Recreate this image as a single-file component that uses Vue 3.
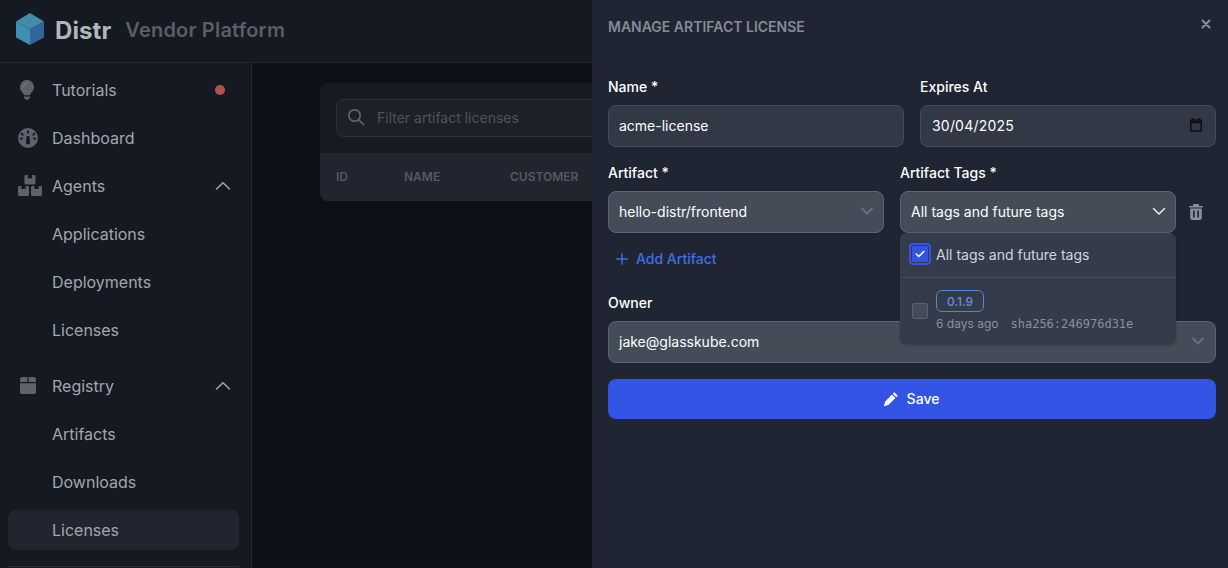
<script setup>
const agentItems = ['Applications', 'Deployments', 'Licenses']
const registryItems = ['Artifacts', 'Downloads', 'Licenses']
</script>

<template>
  <div class="page">
    <header class="topbar">
      <svg class="logo" width="30" height="34" viewBox="0 0 30 34">
        <path d="M15 1 29 9.500 15 17.500 1 9.500Z" fill="#458ba8" />
        <path d="M1 9.500 15 17.500V33L1 25.500Z" fill="#3f8fb2" />
        <path d="M29 9.500 15 17.500V33L29 25.500Z" fill="#33659d" />
      </svg>
      <span class="brand">Distr</span>
      <span class="product">Vendor Platform</span>
    </header>

    <div class="body">
      <aside class="sidebar">
        <nav class="nav">
          <a class="item">
            <svg class="icon" width="24" height="24" viewBox="0 0 24 24"><path d="M11 2a7.200 7.200 0 0 0-4.500 12.600c.8.700 1.300 1.700 1.400 2.600h6.200c.1-.9.600-1.900 1.400-2.600A7.200 7.200 0 0 0 11 2Zm-3 16.500h6v1.200c0 .6-.4 1-1 1h-.7c-.2.800-.7 1.300-1.300 1.300s-1.100-.5-1.300-1.300H9c-.6 0-1-.4-1-1Z" fill="#5d626c"/><path d="M7.500 9c0-1.800 1.400-3.300 3-3.500" fill="none" stroke="#7a7f88" stroke-linecap="round"/></svg>
            <span class="label">Tutorials</span>
            <span class="dot"></span>
          </a>
          <a class="item">
            <svg class="icon" width="24" height="24" viewBox="0 0 24 24"><path fill-rule="evenodd" clip-rule="evenodd" d="M12 2a10 10 0 1 0 0 20 10 10 0 0 0 0-20Zm-.9 2.500h1.800v3h-1.800ZM5.700 6.500l2.200 2.200-1.200 1.200-2.200-2.200Zm12.600 0 1.200 1.200-2.200 2.200-1.200-1.200ZM3.800 11.800h3v1.800h-3Zm13.400 0h3v1.800h-3ZM10.600 10l2.800 0 .6 6.500a2 2 0 0 1-4 0Z" fill="#5d626c"/></svg>
            <span class="label">Dashboard</span>
          </a>
          <a class="item">
            <svg class="icon agents" width="24" height="22" viewBox="0 0 24 22"><path d="M8 0h1.800v2.500c0 .6.400 1 1 1h2.400c.6 0 1-.4 1-1V0H16c.9 0 1.500.6 1.500 1.500V8c0 .9-.6 1.500-1.500 1.500H8C7.100 9.500 6.500 8.900 6.500 8V1.500C6.500.6 7.100 0 8 0ZM1.500 11h1.800v2c0 .6.400 1 1 1h2.400c.6 0 1-.4 1-1v-2h1.800c.9 0 1.500.6 1.500 1.500v7c0 .9-.6 1.500-1.500 1.500h-8C.6 21 0 20.400 0 19.500v-7C0 11.600.6 11 1.500 11Zm13 0h1.800v2c0 .6.400 1 1 1h2.400c.6 0 1-.4 1-1v-2h1.800c.9 0 1.500.6 1.500 1.500v7c0 .9-.6 1.500-1.500 1.500h-8c-.9 0-1.500-.6-1.500-1.500v-7c0-.9.600-1.500 1.500-1.500Z" fill="#5d626c"/></svg>
            <span class="label">Agents</span>
            <svg class="chev" width="16" height="10" viewBox="0 0 16 10"><path d="M1.500 8 8 1.800 14.500 8" fill="none" stroke="#a3a6ab" stroke-width="1.500" stroke-linecap="round" stroke-linejoin="round"/></svg>
          </a>
          <a v-for="name in agentItems" :key="name" class="item sub"><span class="label">{{ name }}</span></a>

          <a class="item group">
            <svg class="icon" width="24" height="24" viewBox="0 0 24 24"><path d="M6.500 3h4.900v5H4V5.500C4 4 5 3 6.500 3Zm6.100 0h4.900C19 3 20 4 20 5.500V8h-7.400ZM4 9.300h16v9c0 1-.8 1.700-1.700 1.700H5.700c-.9 0-1.700-.7-1.700-1.700Z" fill="#5d626c"/></svg>
            <span class="label">Registry</span>
            <svg class="chev" width="16" height="10" viewBox="0 0 16 10"><path d="M1.500 8 8 1.800 14.500 8" fill="none" stroke="#a3a6ab" stroke-width="1.500" stroke-linecap="round" stroke-linejoin="round"/></svg>
          </a>
          <a v-for="(name, i) in registryItems" :key="name" class="item sub" :class="{ active: i === 2 }"><span class="label">{{ name }}</span></a>
        </nav>
        <div class="side-rule"></div>
      </aside>

      <main class="main">
        <section class="card">
          <div class="search-wrap">
            <div class="search">
              <svg width="20" height="20" viewBox="0 0 20 20"><circle cx="8.500" cy="8.500" r="5.700" fill="none" stroke="#5f636c" stroke-width="1.700"/><path d="m12.800 12.800 4.700 4.700" stroke="#5f636c" stroke-width="1.700" stroke-linecap="round"/></svg>
              <span>Filter artifact licenses</span>
            </div>
          </div>
          <div class="thead">
            <span class="col-id">ID</span>
            <span class="col-name">NAME</span>
            <span class="col-cust">CUSTOMER</span>
          </div>
        </section>
      </main>
    </div>

    <aside class="drawer">
      <div class="drawer-head">
        <h2>MANAGE ARTIFACT LICENSE</h2>
        <svg class="close" width="12" height="12" viewBox="0 0 12 12"><path d="m2.500 2.500 7 7M9.500 2.500l-7 7" stroke="#8f949d" stroke-width="1.800" stroke-linecap="round"/></svg>
      </div>

      <form class="form" @submit.prevent>
        <div class="two">
          <div class="field">
            <label>Name *</label>
            <input class="control" type="text" value="acme-license" />
          </div>
          <div class="field">
            <label>Expires At</label>
            <div class="control date">
              <span>30/04/2025</span>
              <svg width="12" height="14" viewBox="0 0 12 14"><path d="M2.500 0v2M9.500 0v2" stroke="#0b0d11" stroke-width="1.500"/><rect x=".8" y="2" width="10.400" height="11" rx="1" fill="none" stroke="#0b0d11" stroke-width="1.500"/><path d="M1 4.200h10" stroke="#0b0d11" stroke-width="2"/></svg>
            </div>
          </div>
        </div>

        <div class="artifact-row">
          <div class="field">
            <label>Artifact *</label>
            <div class="control select">
              <span>hello-distr/frontend</span>
              <svg width="14" height="9" viewBox="0 0 14 9"><path d="m2 1.500 5 5 5-5" fill="none" stroke="#687080" stroke-width="2" stroke-linecap="round" stroke-linejoin="round"/></svg>
            </div>
          </div>
          <div class="field tags">
            <label>Artifact Tags *</label>
            <div class="control select">
              <span>All tags and future tags</span>
              <svg width="14" height="9" viewBox="0 0 14 9"><path d="m1.500 1.500 5.500 5.500 5.500-5.500" fill="none" stroke="#e9ebee" stroke-width="1.500" stroke-linecap="round" stroke-linejoin="round"/></svg>
            </div>
            <div class="dropdown">
              <div class="opt-all">
                <span class="check on">
                  <svg width="10" height="8" viewBox="0 0 10 8"><path d="m1.300 4 2.500 2.500 5-5" fill="none" stroke="#fff" stroke-width="1.600" stroke-linecap="round" stroke-linejoin="round"/></svg>
                </span>
                <span>All tags and future tags</span>
              </div>
              <div class="opt-tag">
                <span class="check"></span>
                <div class="tag-info">
                  <span class="badge">0.1.9</span>
                  <div class="meta"><span>6 days ago</span><span class="sha">sha256:246976d31e</span></div>
                </div>
              </div>
            </div>
          </div>
          <div class="trash-cell">
            <svg width="14" height="16" viewBox="0 0 14 16"><path fill-rule="evenodd" clip-rule="evenodd" d="M5 0h4c.6 0 1 .4 1 1v1h3.200c.4 0 .8.300.8.800s-.4.700-.8.700H.8C.4 3.500 0 3.300 0 2.800S.4 2 .8 2H4V1c0-.6.400-1 1-1ZM1.200 4.500h11.600V14c0 1.100-.9 2-2 2H3.200c-1.100 0-2-.9-2-2ZM4 6.500v7h1.700v-7Zm4.300 0v7H10v-7Z" fill="#8a909b"/></svg>
          </div>
        </div>

        <button class="add" type="button">
          <svg width="12" height="12" viewBox="0 0 12 12"><path d="M6 .7v10.600M.7 6h10.600" stroke="#3f6fe8" stroke-width="1.400" stroke-linecap="round"/></svg>
          Add Artifact
        </button>

        <div class="field">
          <label>Owner</label>
          <div class="control select owner">
            <span>jake@glasskube.com</span>
            <svg width="14" height="9" viewBox="0 0 14 9"><path d="m2 1.500 5 5 5-5" fill="none" stroke="#687080" stroke-width="2" stroke-linecap="round" stroke-linejoin="round"/></svg>
          </div>
        </div>

        <button class="save" type="submit">
          <svg width="16" height="16" viewBox="0 0 16 16"><path d="M11.300 1.200 14.800 4.700 13.300 6.200 9.800 2.700ZM8.900 3.600l3.500 3.500-7 7L1 15.200l1-4.500Z" fill="#fff"/></svg>
          Save
        </button>
      </form>
    </aside>
  </div>
</template>

<style>
html, body { margin: 0; background: #0d1017; }
</style>

<style scoped>
* { box-sizing: border-box; }
.page {
  position: relative;
  height: 100vh;
  overflow: hidden;
  background: #0d1017;
  font-family: Inter, "Liberation Sans", sans-serif;
  font-size: 14px;
}
.topbar {
  height: 63px;
  display: flex;
  align-items: center;
  padding-left: 15px;
  background: #141922;
  border-bottom: 1px solid #232834;
}
.logo { margin-top: -4px; }
.brand {
  margin: -2px 0 0 10px;
  font-size: 24px;
  font-weight: 700;
  letter-spacing: 0.1px;
  color: #b3b5b9;
}
.product {
  margin: -2px 0 0 14px;
  font-size: 20px;
  font-weight: 600;
  letter-spacing: 0.2px;
  color: #5a5e68;
}
.body { display: flex; height: 505px; }
.sidebar {
  width: 252px;
  flex: none;
  padding: 7px 12px 0 8px;
  background: #141922;
  border-right: 1px solid #232834;
}
.nav { display: flex; flex-direction: column; gap: 8px; }
.item {
  height: 40px;
  display: flex;
  align-items: center;
  padding: 0 8px;
  border-radius: 8px;
  color: #a4a6ab;
  font-size: 16px;
  font-weight: 400;
}
.item.group { margin-top: 8px; }
.icon { flex: none; margin-right: 12px; }
.icon.agents { margin-left: 2px; margin-right: 10px; }
.sub { padding-left: 44px; }
.label { flex: 1; }
.active { background: #21252f; }
.dot {
  width: 10px;
  height: 10px;
  margin-right: 6px;
  border-radius: 50%;
  background: #b5504e;
}
.side-rule {
  margin-top: 16px;
  height: 1px;
  background: #2a2f3b;
}
.main { flex: 1; padding: 20px 0 0 68px; min-width: 0; }
.card {
  width: 860px;
  border-radius: 8px;
  overflow: hidden;
  background: #161a23;
}
.search-wrap { padding: 16px; }
.search {
  height: 38px;
  display: flex;
  align-items: center;
  gap: 11px;
  padding: 0 0 2px 9px;
  border: 1px solid #2d323e;
  border-radius: 8px;
  background: #1c2029;
  color: #4f535d;
  font-size: 14px;
}
.thead {
  height: 48px;
  display: flex;
  align-items: center;
  padding: 0 0 2px 16px;
  background: #21252f;
  color: #555963;
  font-size: 12px;
  font-weight: 600;
}
.col-id { width: 68px; }
.col-name { width: 106px; }
.drawer {
  position: absolute;
  top: 0;
  right: 0;
  bottom: 0;
  width: 636px;
  padding: 16px 12px 16px 16px;
  background: #1f2532;
  color: #fff;
}
.drawer-head {
  height: 61px;
  display: flex;
  justify-content: space-between;
}
h2 {
  margin: 0;
  padding-top: 1px;
  font-size: 14px;
  line-height: 20px;
  font-weight: 600;
  color: #858b96;
}
.close { margin: 2px 4px 0 0; }
.form { display: flex; flex-direction: column; gap: 16px; }
.two { display: grid; grid-template-columns: 1fr 1fr; gap: 16px; }
.field { display: flex; flex-direction: column; gap: 8px; min-width: 0; }
label {
  font-size: 14px;
  line-height: 20px;
  font-weight: 500;
  color: #fff;
}
.control {
  width: 100%;
  height: 42px;
  padding: 0 10px 2px;
  border: 1px solid #454c5b;
  border-radius: 8px;
  background: #323846;
  color: #fff;
  font: 400 14px Inter, "Liberation Sans", sans-serif;
  outline: none;
}
.date {
  display: flex;
  align-items: center;
  justify-content: space-between;
  padding-left: 11px;
  padding-right: 13px;
  letter-spacing: 0.2px;
}
.select {
  display: flex;
  align-items: center;
  justify-content: space-between;
  padding-right: 9px;
  background: #444c58;
  border-color: #5d6573;
}
.owner { padding-right: 10px; }
.artifact-row {
  display: grid;
  grid-template-columns: 276px 16px 276px 40px;
  margin-bottom: -8px;
}
.artifact-row > .tags { grid-column: 3; position: relative; }
.trash-cell {
  grid-column: 4;
  display: flex;
  align-items: flex-end;
  justify-content: flex-end;
  padding: 0 13px 13px 0;
}
.dropdown {
  position: absolute;
  z-index: 2;
  top: 70px;
  left: 0;
  right: 0;
  height: 111px;
  border-radius: 6px;
  background: #343b4a;
  color: #d1d5db;
  box-shadow: 0 1px 3px rgba(0, 0, 0, 0.25);
}
.opt-all {
  height: 45px;
  display: flex;
  align-items: center;
  gap: 8px;
  padding: 0 0 2px 12px;
  border-bottom: 1px solid #454c5b;
}
.opt-tag {
  display: flex;
  align-items: center;
  gap: 8px;
  padding: 12px 0 0 12px;
}
.opt-tag .check { margin-top: -2px; }
.check {
  flex: none;
  width: 16px;
  height: 16px;
  display: flex;
  align-items: center;
  justify-content: center;
  border: 1px solid #596170;
  border-radius: 2px;
  background: #434b58;
}
.check.on {
  border-color: #3354e4;
  background: #3354e4;
  outline: 2px solid #3354e4;
  outline-offset: 1px;
  border-radius: 1px;
}
.tag-info { display: flex; flex-direction: column; align-items: flex-start; gap: 2px; }
.badge {
  height: 22px;
  padding: 0 10px;
  display: flex;
  align-items: center;
  border: 1px solid #5583e0;
  border-radius: 6px;
  color: #6490e4;
  font-size: 12px;
  font-weight: 500;
}
.meta {
  display: flex;
  gap: 12px;
  font-size: 12px;
  line-height: 20px;
  color: #8b909a;
}
.sha { font-family: "DejaVu Sans Mono", "Liberation Mono", monospace; }
.add {
  align-self: flex-start;
  height: 36px;
  display: flex;
  align-items: center;
  gap: 8px;
  padding: 0 8px 2px;
  border: 0;
  background: none;
  color: #3f6fe8;
  font: 500 14px Inter, "Liberation Sans", sans-serif;
}
.add svg { margin-top: 2px; }
.save {
  height: 40px;
  display: flex;
  align-items: center;
  justify-content: center;
  gap: 8px;
  padding: 0 2px 2px 0;
  border: 0;
  border-radius: 8px;
  background: #3354e4;
  color: #fff;
  font: 500 14px Inter, "Liberation Sans", sans-serif;
}
.save svg { margin-top: 2px; }
</style>
